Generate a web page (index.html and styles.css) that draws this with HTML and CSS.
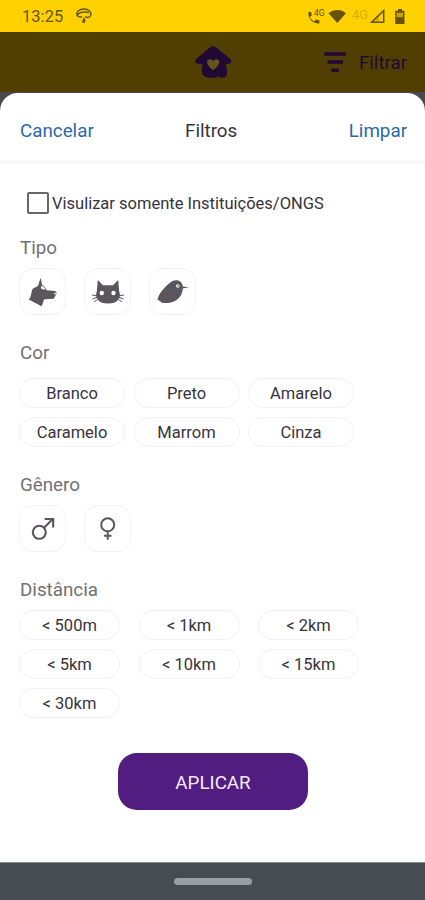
FILE: index.html
```html
<!DOCTYPE html>
<html lang="pt-BR">
<head>
<meta charset="utf-8">
<title>Filtros</title>
<link rel="stylesheet" href="styles.css">
</head>
<body>
<div class="screen">
  <div class="status">
    <span class="clock">13:25</span>
    <svg class="weather" width="18" height="18" viewBox="0 0 18 18" fill="none" stroke="currentColor" stroke-width="1.4"><path d="M2 8.500C1 4.500 4.500 2 9 2s7.500 2.500 6.800 6.200c-.8 3.300-4.800 2.300-5.500 1.300M2 8.500c2-3 5.500-4.200 12-3M2 8.500c1.500 1.300 3.500 1.800 5 1.200"/><path d="M8.700 10c1.800 2 2 3.900 1.500 4.900-.8 1.600-3 1.400-3-.2 0-1.200 1-2 1.500-4.700z" fill="currentColor" stroke="none"/></svg>
    <svg class="signals" width="106" height="20" viewBox="0 0 106 20" fill="currentColor">
      <path d="M5.500 5.800 8.200 6l.5 3.500-1.900 1.600c1 2 2.500 3.400 4.300 4.300l1.800-1.900 3.500.8v3.200C9.500 18 4.500 12.500 5.500 5.800z"/>
      <text x="11" y="10" class="tiny">4G</text>
      <path d="M25.500 7.300C30.500 2.800 38.500 2.800 43 7.300l-8.700 9.700z"/>
      <text x="49" y="12.500" class="net">4G</text>
      <path d="M68.500 16.200h12.200V4.600z" fill="none" stroke="currentColor" stroke-width="1.500"/><path d="M76 9.200V16h-5.500z" opacity=".25"/>
      <path d="M95 3h4v1.800h2.500V18h-9.300V4.800H95z"/><path d="M93.700 6.700h6.300v4.500h-6.300z" fill="#c7a300"/>
    </svg>
  </div>
  <div class="appbar">
    <svg class="logo" width="40" height="36" viewBox="0 0 40 36"><path d="M17.200 3.300q2.800-2 5.600 0l14.500 11.800q2.400 2.700-.5 4.300l-4 .8 1.300 7.300q.8 6.200-5.100 6.200-2.700 0-3.500-2-.8 2-3.500 2h-5q-8.200 0-8.200-7.200l.7-6.500-5.800-.5q-2.900-1.700-.6-4.400z"/><path class="heart" d="M20.200 26.200c-8.300-6.300-6.700-10.600-3.600-11 1.800-.2 3 .8 3.600 2 .6-1.200 1.800-2.200 3.600-2 3.100.4 4.700 4.700-3.600 11z"/></svg>
    <div class="filter">
      <svg width="22" height="21" viewBox="0 0 22 21" stroke="currentColor" stroke-width="3.400"><path d="M.3 2h21.400M3.500 10h15.500M7.300 18.200h7.500"/></svg>
      <span>Filtrar</span>
    </div>
  </div>
  <div class="sheet">
    <div class="head"><a>Cancelar</a><span>Filtros</span><a>Limpar</a></div>
    <label class="only"><span class="box"></span><span>Visulizar somente Instituições/ONGS</span></label>
    <h2>Tipo</h2>
    <div class="tiles">
      <div class="tile"><svg width="30" height="30" viewBox="0 0 30 30"><path d="M.8 22.500C3.500 20 3.200 14 4.800 11.700c1.300-1 4.300-1.500 5.400-3.200L12.600.8l1.600 7.400c2.200.8 3.300 3 4.600 5l8.300.8c1.600.3 1.600 2.200 1 3.500l-2.300 4.200-9 .5c-2 1-1.200 3.700-3.300 7z"/><path class="light" d="M12.800 9.500c2-.8 3.800.7 4.500 3.200l-3.800-.7z"/><path class="light" d="m25.700 16.200 2.300-.6-.7 2.300z"/></svg></div>
      <div class="tile"><svg width="34" height="30" viewBox="0 0 34 30"><path d="m6.800 3 5.200 5.200h10L27.200 3l1 11.500q1.600 4-.5 7.500-2.500 4.500-10.700 4.500T6.300 22q-2.100-3.500-.5-7.500z"/><path d="m6 18.800-5-.8m5 2.300L1.500 22m5 .3L3 25M28 18.800l5-.8m-5 2.300 4.500 1.700m-5 .3L31 25" stroke="currentColor" stroke-width="1"/><circle class="light" cx="10.800" cy="16" r="2.200"/><circle class="light" cx="22.500" cy="16" r="2.200"/></svg></div>
      <div class="tile"><svg width="32" height="30" viewBox="0 0 32 30"><path d="M.8 21.500C3 15 8 9.800 13 5.800c4.500-4 11.800-3.300 12.800 3.700l6 .7-6 1.300C25.300 19.800 19.500 25.300 11 26H5.800C3.500 25.500 3.800 23.800.5 22.700z"/><circle class="light" cx="20.800" cy="9" r="1.800"/><circle cx="21" cy="9" r=".8"/></svg></div>
    </div>
    <h2 class="color-title">Cor</h2>
    <div class="pills colors"><span>Branco</span><span>Preto</span><span>Amarelo</span><span>Caramelo</span><span>Marrom</span><span>Cinza</span></div>
    <h2 class="gender-title">Gênero</h2>
    <div class="tiles">
      <div class="tile"><svg width="30" height="30" viewBox="0 0 30 30" fill="none" stroke="currentColor" stroke-width="2.100"><circle cx="11.300" cy="18.300" r="6.500"/><path d="m16 13.700 8.500-8.500M16.700 5h8.500v8.500"/></svg></div>
      <div class="tile"><svg width="30" height="30" viewBox="0 0 30 30" fill="none" stroke="currentColor" stroke-width="2"><circle cx="14.700" cy="10.800" r="6.500"/><path d="M14.700 17.300v8.400M10.900 21.800h7.600"/></svg></div>
    </div>
    <h2 class="distance-title">Distância</h2>
    <div class="pills distances"><span>&lt; 500m</span><span>&lt; 1km</span><span>&lt; 2km</span><span>&lt; 5km</span><span>&lt; 10km</span><span>&lt; 15km</span><span>&lt; 30km</span></div>
    <button class="apply">APLICAR</button>
  </div>
  <div class="nav"><div class="handle"></div></div>
</div>
</body>
</html>
```
FILE: styles.css
```css
* { box-sizing: border-box; }
body { margin: 0; font-family: Roboto, sans-serif; }
.screen { width: 425px; height: 900px; display: flex; flex-direction: column; overflow: hidden; background: #4a4a4e; }
svg { display: block; flex: none; fill: currentColor; }
svg[fill="none"] { fill: none; }

.status { height: 32px; flex: none; display: flex; align-items: center; padding: 0 14px 0 22px; background: #ffd100; color: #665300; }
.clock { font-size: 16.400px; letter-spacing: .1px; }
.weather { margin-left: 12px; }
.signals { margin-left: auto; margin-right: 2px; }
.tiny { font-size: 8.500px; }
.net { font-size: 13px; fill: #d7ae00; }

.appbar { height: 60px; flex: none; display: flex; align-items: center; justify-content: flex-end; padding-right: 18px; background: #503f00; color: #210936; }
.logo { margin-right: 91px; }
.filter { padding-top: 1px; display: flex; align-items: center; gap: 13px; font-size: 18.700px; }
.heart { fill: #65541b; }

.sheet { height: 769px; flex: none; margin-top: 1px; padding: 0 19px; display: flex; flex-direction: column; background: #fff; border-radius: 18px 18px 0 0; color: #37343b; }
.head { height: 71px; flex: none; margin: 0 -19px; padding: 8px 18px 0 20px; display: grid; grid-template-columns: 165px 1fr auto; align-items: center; border-bottom: 4px solid #f8f8f9; font-size: 18.800px; }
.head a { color: #2d69aa; }
.only { display: flex; align-items: center; gap: 3px; height: 24px; margin: 27px 0 0 8px; font-size: 16.500px; white-space: nowrap; }
.box { width: 22px; height: 22px; border: 2px solid #69666a; border-radius: 2px; }
.only span:last-child { padding-top: 1px; }
h2 { margin: 21px 0 0 1px; font-size: 18.800px; font-weight: 400; line-height: 24px; color: #717173; }
.tiles { display: flex; gap: 18px; margin-top: 8px; }
.tile { width: 47px; height: 47px; display: flex; align-items: center; justify-content: center; border: 1px solid #f2f1f3; border-radius: 14px; color: #5b565e; }
.light { fill: #fff; }
.color-title { margin-top: 26px; }
.pills { display: grid; row-gap: 9px; font-size: 16.500px; }
.pills span { height: 30px; padding-top: 1px; display: flex; align-items: center; justify-content: center; border: 1px solid #f2f1f3; border-radius: 15px; }
.colors { grid-template-columns: repeat(3, 106px); column-gap: 8.500px; margin-top: 13px; }
.gender-title { margin-top: 26px; }
.distance-title { margin-top: 26px; }
.distances { grid-template-columns: repeat(3, 101px); column-gap: 18.500px; margin-top: 8px; }
.apply { width: 190px; height: 57px; flex: none; margin: 35px 0 0 99px; padding: 2px 0 0; border: 0; border-radius: 19px; background: #521d80; color: #f6eafb; font: 18.800px Roboto, sans-serif; }
.nav { height: 38px; flex: none; display: flex; justify-content: center; align-items: center; background: #454c52; border-top: 1px solid #888d91; }
.handle { width: 78px; height: 7px; border-radius: 4px; background: #999fa1; }
```
